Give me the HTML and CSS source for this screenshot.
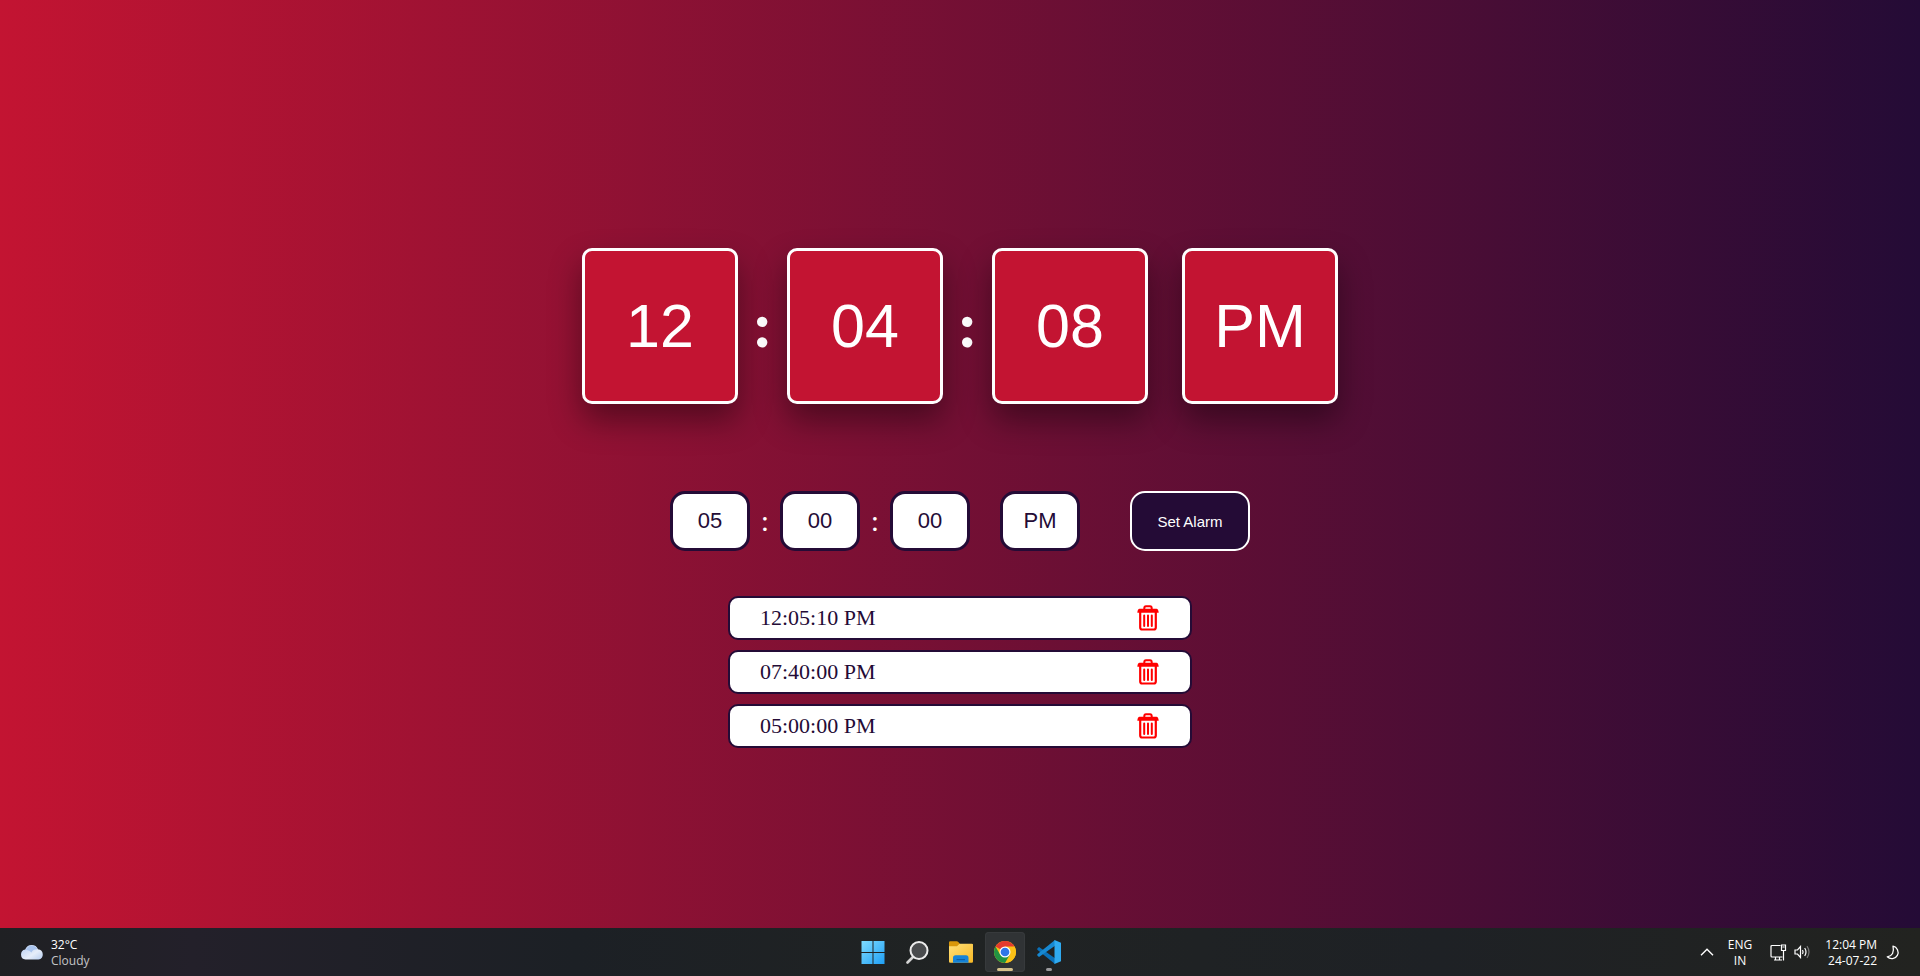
FILE: index.html
```
<!DOCTYPE html>
<html lang="en">
<head>
<meta charset="utf-8">
<title>Alarm Clock</title>
<link rel="stylesheet" href="styles.css">
</head>
<body>
<svg class="defs" width="0" height="0" aria-hidden="true">
  <symbol id="trash" viewBox="0 0 22 26">
    <path d="M7.300 4.500V3.200Q7.300 1.300 9 1.300h4Q14.700 1.300 14.700 3.200v1.300" fill="none" stroke="currentColor" stroke-width="2"/>
    <path d="M2.500 3.800h17q1.800 0 2.200 3.900H.300Q.700 3.800 2.500 3.800z" fill="currentColor"/>
    <path d="M3.200 7v15.500q0 2 2 2h11.600q2 0 2-2V7" fill="none" stroke="currentColor" stroke-width="2.200"/>
    <path d="M7.200 10.500v10.500M11 10.500v10.500M14.800 10.500v10.500" stroke="currentColor" stroke-width="2" stroke-linecap="round"/>
  </symbol>
</svg>
<main class="app">
  <section class="clock" aria-label="Current time">
    <div class="tile">12</div>
    <span class="clock-colon">:</span>
    <div class="tile">04</div>
    <span class="clock-colon">:</span>
    <div class="tile">08</div>
    <div class="tile meridiem">PM</div>
  </section>
  <form class="alarm-form">
    <input class="field" type="text" aria-label="Hour" value="05">
    <span class="form-colon">:</span>
    <input class="field" type="text" aria-label="Minute" value="00">
    <span class="form-colon">:</span>
    <input class="field" type="text" aria-label="Second" value="00">
    <input class="field period" type="text" aria-label="AM or PM" value="PM">
    <button class="set-alarm" type="button">Set Alarm</button>
  </form>
  <ul class="alarms">
    <li class="alarm"><span>12:05:10 PM</span><button class="delete" type="button" aria-label="Delete alarm"><svg class="trash"><use href="#trash"/></svg></button></li>
    <li class="alarm"><span>07:40:00 PM</span><button class="delete" type="button" aria-label="Delete alarm"><svg class="trash"><use href="#trash"/></svg></button></li>
    <li class="alarm"><span>05:00:00 PM</span><button class="delete" type="button" aria-label="Delete alarm"><svg class="trash"><use href="#trash"/></svg></button></li>
  </ul>
</main>
<footer class="taskbar">
  <div class="weather">
    <svg width="24" height="16" viewBox="0 0 24 16" aria-hidden="true">
      <defs>
        <linearGradient id="cloud" x1="0" y1="0" x2="1" y2="1"><stop offset="0" stop-color="#b4cbf0"/><stop offset=".6" stop-color="#e6edf9"/><stop offset="1" stop-color="#b6cdf0"/></linearGradient>
      </defs>
      <path d="M5.500 15.500a5 5 0 0 1-.3-9.900A6.800 6.800 0 0 1 18 5.200a5.200 5.200 0 0 1 .5 10.300z" fill="url(#cloud)"/>
      <path d="M6 6a6.300 6.300 0 0 1 11.500-.8Q13 5 11.500 8.500 9 5.500 6 6z" fill="#a9c4ee"/>
    </svg>
    <div class="weather-text"><span>32°C</span><span class="muted">Cloudy</span></div>
  </div>
  <nav class="apps" aria-label="Apps">
    <button class="app-button" type="button" aria-label="Start">
      <svg width="24" height="24" viewBox="0 0 24 24">
        <defs><linearGradient id="win" x1="0" y1="0" x2="1" y2="1" gradientUnits="objectBoundingBox"><stop offset="0" stop-color="#7fdcff"/><stop offset="1" stop-color="#1f9ff5"/></linearGradient></defs>
        <path d="M.500 1h11v11h-11zM12.500 1h11v11h-11zM.500 13h11v11h-11zM12.500 13h11v11h-11z" fill="url(#win)"/>
      </svg>
    </button>
    <button class="app-button" type="button" aria-label="Search">
      <svg width="24" height="24" viewBox="0 0 24 24">
        <path d="M8.500 16.500L2.500 22.500" stroke="#d4d4d4" stroke-width="2.600" stroke-linecap="round"/>
        <circle cx="14" cy="10.500" r="8.500" fill="#4a4c4e" stroke="#ececec" stroke-width="2"/>
      </svg>
    </button>
    <button class="app-button" type="button" aria-label="File Explorer">
      <svg width="24" height="24" viewBox="0 0 24 24">
        <defs>
          <linearGradient id="folder" x1="0" y1="0" x2="1" y2="1"><stop offset="0" stop-color="#ffe07a"/><stop offset="1" stop-color="#f7b825"/></linearGradient>
        </defs>
        <path d="M0 2.500Q0 1.300 1.200 1.300h6.500q1 0 1.600.7L11 4H24v4H0z" fill="#d9970a"/>
        <path d="M0 6.200h8l2.500-2.500h12.300Q24 3.700 24 5v16.500q0 1.200-1.200 1.200H1.200Q0 22.700 0 21.500z" fill="url(#folder)"/>
        <path d="M4 22.700V18q0-2.700 2.500-2.700h10.500q2.500 0 2.500 2.700v4.700z" fill="#1583d8"/>
        <path d="M7.500 19h8.500v1.200H7.500z" fill="#0c5ea8"/>
      </svg>
    </button>
    <button class="app-button active" type="button" aria-label="Chrome">
      <svg width="24" height="24" viewBox="0 0 48 48">
        <circle cx="24" cy="24" r="22" fill="#fbc116"/>
        <path d="M24 24L4.950 13A22 22 0 0 1 43.050 13z" fill="#e33b2e"/>
        <path d="M24 13h19.050A22 22 0 0 1 24 46l9.500-16.500z" fill="#fbc116"/>
        <path d="M4.950 13A22 22 0 0 0 24 46l9.500-16.500L24 24 14.500 29.500z" fill="#229342"/>
        <circle cx="24" cy="24" r="11" fill="#fff"/>
        <circle cx="24" cy="24" r="8.700" fill="#2f76e8"/>
      </svg>
    </button>
    <button class="app-button running" type="button" aria-label="Visual Studio Code">
      <svg width="24" height="24" viewBox="0 0 24 24">
        <path d="M.300 8.500L2 6.900 18 18.200V24L.300 9.700z" fill="#0a70b8"/>
        <path d="M.300 15.500L2 17.100 18 5.800V0L.300 14.300z" fill="#1789d2"/>
        <path d="M17.500 0L24 2.800v18.400L17.500 24z" fill="#2faaf0"/>
      </svg>
    </button>
  </nav>
  <div class="tray">
    <svg class="chevron" width="14" height="8" viewBox="0 0 14 8" aria-hidden="true"><path d="M1 7.200L7 1.200 13 7.200" fill="none" stroke="#fff" stroke-width="1.400"/></svg>
    <div class="language"><span>ENG</span><span>IN</span></div>
    <svg class="network" width="17" height="17" viewBox="0 0 17 17" fill="none" stroke="#fff" stroke-width="1.200" aria-hidden="true">
      <path d="M10.500 1.500H2q-1 0-1 1v9.500q0 1 1 1h10.500M4 16h8M5.500 13v3M9.500 13v3"/>
      <path d="M11.500 1h4v5.500h-4zM13.500 6.500V16.500M12.500 3h2"/>
    </svg>
    <svg class="volume" width="17" height="14" viewBox="0 0 17 14" fill="none" stroke="#fff" stroke-width="1.200" aria-hidden="true">
      <path d="M1 5h2.500L6.500 1.500v11L3.500 9H1z"/><path d="M8.500 5q1.200 2 0 4M10.700 3q2.600 4 0 8"/><path d="M13 1.200q4 5.800 0 11.600" stroke="#777"/>
    </svg>
    <div class="datetime"><span>12:04 PM</span><span>24-07-22</span></div>
    <svg class="moon" width="14" height="15" viewBox="0 0 14 15" aria-hidden="true"><path d="M7 1.200a6.300 6.300 0 1 1-5.700 10.600Q9 10.500 7 1.200z" fill="none" stroke="#fff" stroke-width="1.300" stroke-linejoin="round"/></svg>
  </div>
</footer>
</body>
</html>
```
FILE: styles.css
```
* {
  box-sizing: border-box;
}

body {
  margin: 0;
  min-height: 100vh;
  display: flex;
  flex-direction: column;
  font-family: "Liberation Serif", "Times New Roman", serif;
}

.defs {
  position: absolute;
}

.app {
  flex: 1;
  display: flex;
  flex-direction: column;
  align-items: center;
  padding-top: 248px;
  background: linear-gradient(to right, #c31432, #240b36);
}

.clock {
  display: flex;
  align-items: center;
}

.tile {
  display: flex;
  align-items: center;
  justify-content: center;
  width: 156px;
  height: 156px;
  border: 3px solid #fff;
  border-radius: 10px;
  background: #c31432;
  color: #fff;
  font-family: "Liberation Sans", Arial, sans-serif;
  font-size: 61px;
  box-shadow: 0 16px 32px rgba(0, 0, 0, 0.4);
}

.clock-colon {
  width: 49px;
  color: #fff;
  font-size: 64px;
  font-weight: bold;
  text-align: center;
}

.meridiem {
  margin-left: 34px;
}

.alarm-form {
  display: flex;
  align-items: center;
  gap: 10px;
  margin-top: 87px;
}

.field {
  width: 80px;
  height: 60px;
  padding: 0;
  border: 3px solid #240b36;
  border-radius: 15px;
  background: #fff;
  color: #240b36;
  font-family: "Liberation Sans", Arial, sans-serif;
  font-size: 22px;
  text-align: center;
}

.form-colon {
  width: 10px;
  color: #fff;
  font-size: 30px;
  text-align: center;
}

.period {
  margin-left: 20px;
}

.set-alarm {
  width: 120px;
  height: 60px;
  margin-left: 40px;
  padding: 0;
  border: 2px solid #fff;
  border-radius: 15px;
  background: #240b36;
  color: #fff;
  font-family: "Liberation Sans", Arial, sans-serif;
  font-size: 15px;
}

.alarms {
  display: flex;
  flex-direction: column;
  gap: 10px;
  width: 464px;
  margin: 45px 0 0;
  padding: 0;
  list-style: none;
}

.alarm {
  display: flex;
  align-items: center;
  justify-content: space-between;
  height: 44px;
  padding: 0 31px 0 30px;
  border: 2px solid #240b36;
  border-radius: 10px;
  background: #fff;
  color: #240b36;
  font-size: 22px;
}

.delete {
  display: flex;
  padding: 0;
  border: 0;
  background: none;
  color: #f00;
}

.trash {
  width: 22px;
  height: 26px;
}

.taskbar {
  display: grid;
  grid-template-columns: 1fr auto 1fr;
  align-items: center;
  height: 48px;
  background: linear-gradient(to right, #1f2023, #23202a 10%, #1c2025 30%, #202323 50%, #1e2125 75%, #222320);
  color: #fff;
  font-family: "Open Sans", "Noto Sans", sans-serif;
  font-size: 12px;
  line-height: 16px;
}

.weather {
  display: flex;
  align-items: center;
  gap: 7px;
  padding-left: 20px;
}

.weather-text,
.language,
.datetime {
  display: flex;
  flex-direction: column;
  padding-top: 2px;
}

.muted {
  color: #c4c4c6;
}

.apps {
  display: flex;
  gap: 4px;
  padding-left: 2px;
}

.app-button {
  position: relative;
  display: flex;
  align-items: center;
  justify-content: center;
  width: 40px;
  height: 40px;
  padding: 0;
  border: 0;
  border-radius: 4px;
  background: none;
}

.active {
  background: #303335;
  box-shadow: inset 0 0 0 1px #373a3c;
}

.active::after,
.running::after {
  content: "";
  position: absolute;
  bottom: 1px;
  width: 16px;
  height: 3px;
  border-radius: 2px;
  background: #d6c28c;
}

.running::after {
  width: 6px;
  background: #9a9a9c;
}

.tray {
  display: flex;
  align-items: center;
  justify-content: flex-end;
  padding-right: 20px;
}

.language {
  align-items: center;
  margin: 0 18px 0 14px;
}

.network {
  margin-right: 7px;
}

.volume {
  margin-right: 14px;
}

.datetime {
  align-items: flex-end;
  margin-right: 9px;
}
```
